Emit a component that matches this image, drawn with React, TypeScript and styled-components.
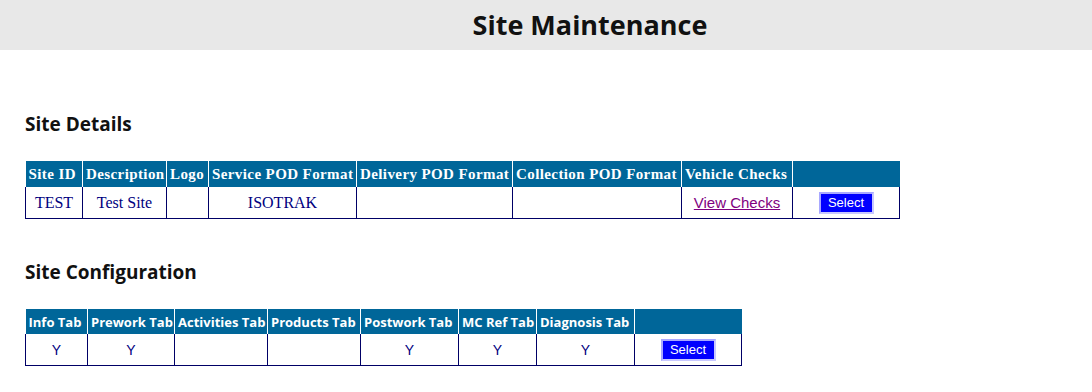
import styled, {createGlobalStyle} from "styled-components";

const GlobalStyle = createGlobalStyle`
    body {
        margin: 0;
        background: #ffffff;
        font-family: "Open Sans", sans-serif;
    }
`

type Column = { title: string; width: number };

const detailColumns: Column[] = [
    {title: "Site ID", width: 57},
    {title: "Description", width: 84},
    {title: "Logo", width: 42},
    {title: "Service POD Format", width: 148},
    {title: "Delivery POD Format", width: 156},
    {title: "Collection POD Format", width: 169},
    {title: "Vehicle Checks", width: 111},
    {title: "", width: 107},
];

const configColumns: Column[] = [
    {title: "Info Tab", width: 62},
    {title: "Prework Tab", width: 87},
    {title: "Activities Tab", width: 93},
    {title: "Products Tab", width: 93},
    {title: "Postwork Tab", width: 98},
    {title: "MC Ref Tab", width: 78},
    {title: "Diagnosis Tab", width: 98},
    {title: "", width: 107},
];

const configValues = ["Y", "Y", "", "", "Y", "Y", "Y"];

const total = (cols: Column[]) => cols.reduce((sum, c) => sum + c.width, 0);

export default function App() {
    return (
        <>
            <GlobalStyle/>
            <Banner>
                <Title>Site Maintenance</Title>
            </Banner>

            <Content>
                <SectionTitle>Site Details</SectionTitle>
                <DataTable style={{width: total(detailColumns)}}>
                    <colgroup>
                        {detailColumns.map((c, i) => <col key={i} style={{width: c.width}}/>)}
                    </colgroup>
                    <thead>
                    <tr>
                        {detailColumns.map((c, i) => <HeadCell key={i} $serif>{c.title}</HeadCell>)}
                    </tr>
                    </thead>
                    <tbody>
                    <tr>
                        <BodyCell $serif>TEST</BodyCell>
                        <BodyCell $serif>Test Site</BodyCell>
                        <BodyCell $serif></BodyCell>
                        <BodyCell $serif>ISOTRAK</BodyCell>
                        <BodyCell $serif></BodyCell>
                        <BodyCell $serif></BodyCell>
                        <BodyCell><CheckLink href="#">View Checks</CheckLink></BodyCell>
                        <BodyCell><SelectButton>Select</SelectButton></BodyCell>
                    </tr>
                    </tbody>
                </DataTable>

                <SectionTitle $spaced>Site Configuration</SectionTitle>
                <DataTable style={{width: total(configColumns)}}>
                    <colgroup>
                        {configColumns.map((c, i) => <col key={i} style={{width: c.width}}/>)}
                    </colgroup>
                    <thead>
                    <tr>
                        {configColumns.map((c, i) => <HeadCell key={i}>{c.title}</HeadCell>)}
                    </tr>
                    </thead>
                    <tbody>
                    <tr>
                        {configValues.map((v, i) => <BodyCell key={i}>{v}</BodyCell>)}
                        <BodyCell><SelectButton>Select</SelectButton></BodyCell>
                    </tr>
                    </tbody>
                </DataTable>
            </Content>
        </>
    );
}

const Banner = styled.header`
    height: 50px;
    background: #e8e8e8;
    display: flex;
    justify-content: center;
    align-items: center;
    padding-left: 88px;
`

const Title = styled.h1`
    margin: 0;
    font-family: "Open Sans", sans-serif;
    font-size: 27px;
    line-height: 50px;
    font-weight: 700;
    color: #111111;
`

const Content = styled.main`
    padding: 0 25px;
`

const SectionTitle = styled.h2<{ $spaced?: boolean }>`
    margin: ${p => (p.$spaced ? "40px" : "61px")} 0 23px;
    font-family: "Open Sans", sans-serif;
    font-size: 19px;
    line-height: 27px;
    font-weight: 700;
    color: #111111;
`

const DataTable = styled.table`
    border-collapse: collapse;
    table-layout: fixed;
`

const HeadCell = styled.th<{ $serif?: boolean }>`
    height: ${p => (p.$serif ? "26px" : "25px")};
    padding: 0 0 0 3px;
    background: #006699;
    color: #ffffff;
    border-left: 1px solid #ffffff;
    white-space: nowrap;
    overflow: hidden;
    font-family: ${p => (p.$serif ? `"Liberation Serif", serif` : `"Open Sans", sans-serif`)};
    font-size: ${p => (p.$serif ? "15px" : "13px")};
    letter-spacing: ${p => (p.$serif ? "0.4px" : "0")};
    font-weight: 700;
    text-align: left;

    &:first-child {
        border-left: none;
    }
`

const BodyCell = styled.td<{ $serif?: boolean }>`
    height: 31px;
    padding: 0 2px;
    border-left: 1px solid #000066;
    border-right: 1px solid #000066;
    border-bottom: 1px solid #000066;
    text-align: center;
    vertical-align: middle;
    color: #000080;
    font-family: ${p => (p.$serif ? `"Liberation Serif", serif` : `"Liberation Sans", Arial, sans-serif`)};
    font-size: ${p => (p.$serif ? "16px" : "14px")};
`

const CheckLink = styled.a`
    color: #800080;
    font-family: "Liberation Sans", Arial, sans-serif;
    font-size: 15px;
    text-decoration: underline;
`

const SelectButton = styled.button`
    width: 55px;
    height: 22px;
    padding: 0;
    background: #0000ff;
    color: #ffffff;
    border: 2px solid #a8a8ff;
    border-right-color: #c8c8ff;
    border-bottom-color: #c8c8ff;
    font-family: "Liberation Sans", Arial, sans-serif;
    font-size: 13px;
    cursor: pointer;
`
